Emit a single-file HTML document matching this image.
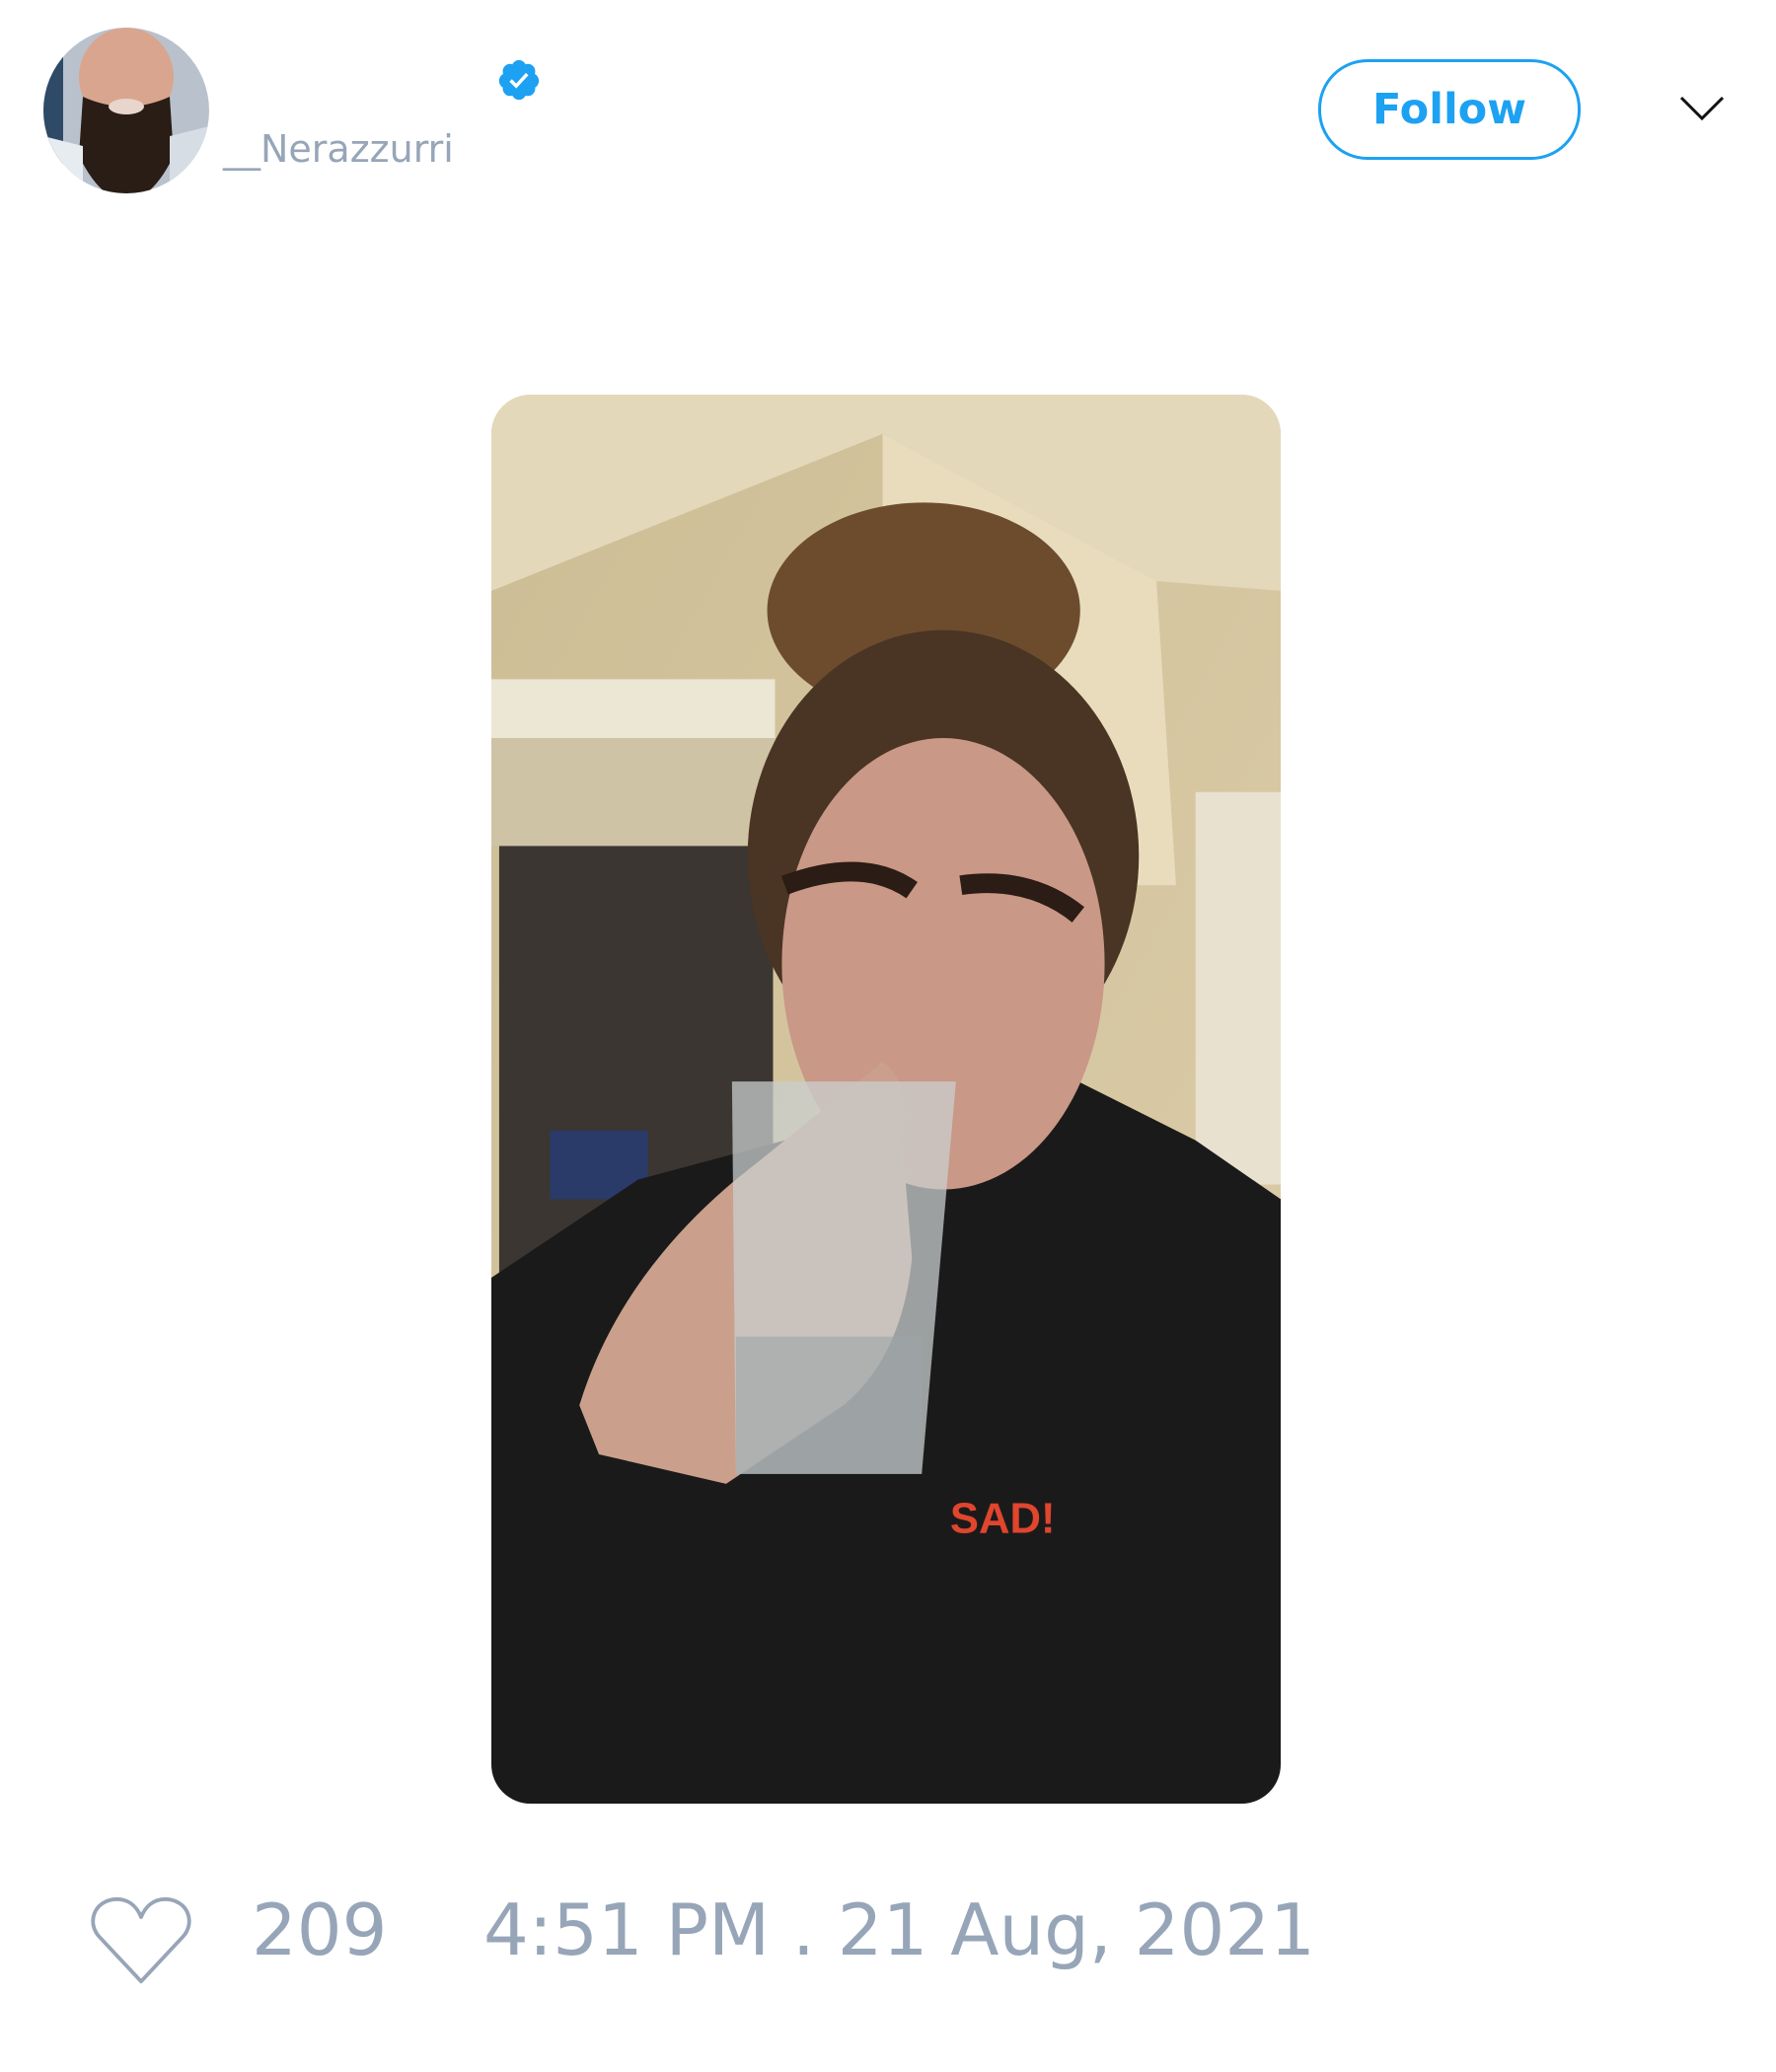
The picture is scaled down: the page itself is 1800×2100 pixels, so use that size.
<!DOCTYPE html>
<html><head><meta charset="utf-8"><style>
html,body{margin:0;padding:0;background:#fff;}
body{width:1800px;height:2100px;position:relative;overflow:hidden;font-family:"DejaVu Sans","Liberation Sans",sans-serif;}
.abs{position:absolute;}
</style></head><body>
<svg class="abs" style="left:44px;top:28px" width="168" height="168" viewBox="0 0 168 168">
<defs><clipPath id="av"><circle cx="84" cy="84" r="84"/></clipPath></defs>
<g clip-path="url(#av)">
<rect width="168" height="168" fill="#b9c2cc"/>
<rect x="0" y="0" width="20" height="168" fill="#2f4a66"/>
<ellipse cx="84" cy="50" rx="48" ry="50" fill="#d9a58f"/>
<path d="M40 70 Q84 90 128 70 L132 130 Q110 175 84 175 Q58 175 36 130 Z" fill="#2a1d16"/>
<ellipse cx="84" cy="80" rx="18" ry="8" fill="#e8d5cc"/>
<path d="M0 110 L40 120 L40 168 L0 168Z" fill="#e7ecf1"/>
<path d="M128 110 L168 100 L168 168 L128 168Z" fill="#d7dde4"/>
</g></svg>
<div class="abs" style="left:226px;top:126px;font-size:38px;color:#97a5b8;line-height:50px">__Nerazzurri</div>
<svg class="abs" style="left:503px;top:58px" width="46" height="46" viewBox="0 0 24 24">
<path fill="#1da1f2" d="M22.5 12.5c0-1.58-.875-2.95-2.148-3.6.154-.435.238-.905.238-1.4 0-2.210-1.71-3.998-3.818-3.998-.47 0-.92.084-1.336.25C14.818 2.415 13.51 1.5 12 1.5s-2.816.917-3.437 2.25c-.415-.165-.866-.25-1.336-.25-2.11 0-3.818 1.79-3.818 4 0 .494.083.964.237 1.4-1.272.65-2.147 2.018-2.147 3.6 0 1.495.782 2.798 1.942 3.486-.02.17-.032.34-.032.514 0 2.21 1.708 4 3.818 4 .47 0 .92-.086 1.335-.25.62 1.334 1.926 2.25 3.437 2.25 1.512 0 2.818-.916 3.437-2.250.415.163.865.248 1.336.248 2.11 0 3.818-1.79 3.818-4 0-.174-.012-.344-.033-.513 1.158-.687 1.943-1.990 1.943-3.484z"/>
<path fill="#fff" d="M10.54 16.5l-3.6-3.6 1.3-1.3 2.3 2.3 5.1-5.6 1.35 1.25z"/>
</svg>
<div class="abs" style="left:1336px;top:60px;width:260px;height:96px;border:3px solid #1da1f2;border-radius:50px;color:#1da1f2;font-weight:bold;font-size:43px;line-height:96px;text-align:center">Follow</div>
<svg class="abs" style="left:1701px;top:94px" width="48" height="32" viewBox="0 0 48 32"><path d="M3 5 L24 26 L45 5" fill="none" stroke="#111" stroke-width="3"/></svg>

<svg class="abs" style="left:498px;top:400px" width="800" height="1428" viewBox="0 0 807 1436" preserveAspectRatio="none">
<defs>
<clipPath id="m"><rect width="807" height="1436" rx="40"/></clipPath>
<linearGradient id="wall" x1="0" y1="0" x2="1" y2="1"><stop offset="0" stop-color="#cdbd95"/><stop offset="1" stop-color="#dcceaa"/></linearGradient>
</defs>
<g clip-path="url(#m)">
<rect width="807" height="1436" fill="url(#wall)"/>
<path d="M0 0 H807 V200 L680 190 L400 40 L0 200 Z" fill="#e3d8ba"/>
<path d="M400 40 L680 190 L700 500 L400 500Z" fill="#e8dcbc"/>
<rect x="0" y="290" width="290" height="60" fill="#ece6d4"/>
<rect x="0" y="350" width="290" height="110" fill="#cfc3a6"/>
<rect x="8" y="460" width="280" height="560" fill="#3b3631"/>
<rect x="60" y="750" width="100" height="70" fill="#2a3b6a"/>
<rect x="720" y="405" width="87" height="400" fill="#e8e1cf"/>
<path d="M0 900 L150 800 L300 760 L430 700 L600 700 L720 760 L807 820 V1436 H0Z" fill="#1b1a1a"/>
<ellipse cx="442" cy="220" rx="160" ry="110" fill="#6d4c2e"/>
<ellipse cx="462" cy="470" rx="200" ry="230" fill="#4a3424"/>
<ellipse cx="462" cy="580" rx="165" ry="230" fill="#c99886"/>
<path d="M300 500 Q380 470 430 505" fill="none" stroke="#2b1c15" stroke-width="20"/>
<path d="M480 500 Q550 490 600 530" fill="none" stroke="#2b1c15" stroke-width="20"/>
<path d="M90 1030 Q130 900 250 800 L400 680 Q430 700 420 760 L430 880 Q420 980 360 1030 L240 1110 L110 1080Z" fill="#caa08c"/>
<path d="M246 700 L475 700 L440 1100 L250 1100Z" fill="#c9cdcd" opacity="0.75"/>
<rect x="250" y="960" width="190" height="140" fill="#9da5a6" opacity="0.6"/>
<text x="469" y="1160" font-family="Liberation Sans,sans-serif" font-weight="bold" font-size="44" fill="#e0452e">SAD!</text>
</g></svg>

<svg class="abs" style="left:90px;top:1920px" width="106" height="92" viewBox="0 0 108 96">
<path d="M54 92 L10 45 C-4 30 4 6 28 5 C42 5 50 14 54 24 C58 14 66 5 80 5 C104 6 112 30 98 45 Z" fill="none" stroke="#97a5b8" stroke-width="4" stroke-linejoin="round"/>
</svg>
<div class="abs" style="left:255px;top:1911px;font-size:72px;line-height:90px;color:#97a5b8;white-space:nowrap">209</div>
<div class="abs" style="left:490px;top:1911px;font-size:72px;line-height:90px;color:#97a5b8;white-space:nowrap">4:51 PM . 21 Aug, 2021</div>
</body></html>
